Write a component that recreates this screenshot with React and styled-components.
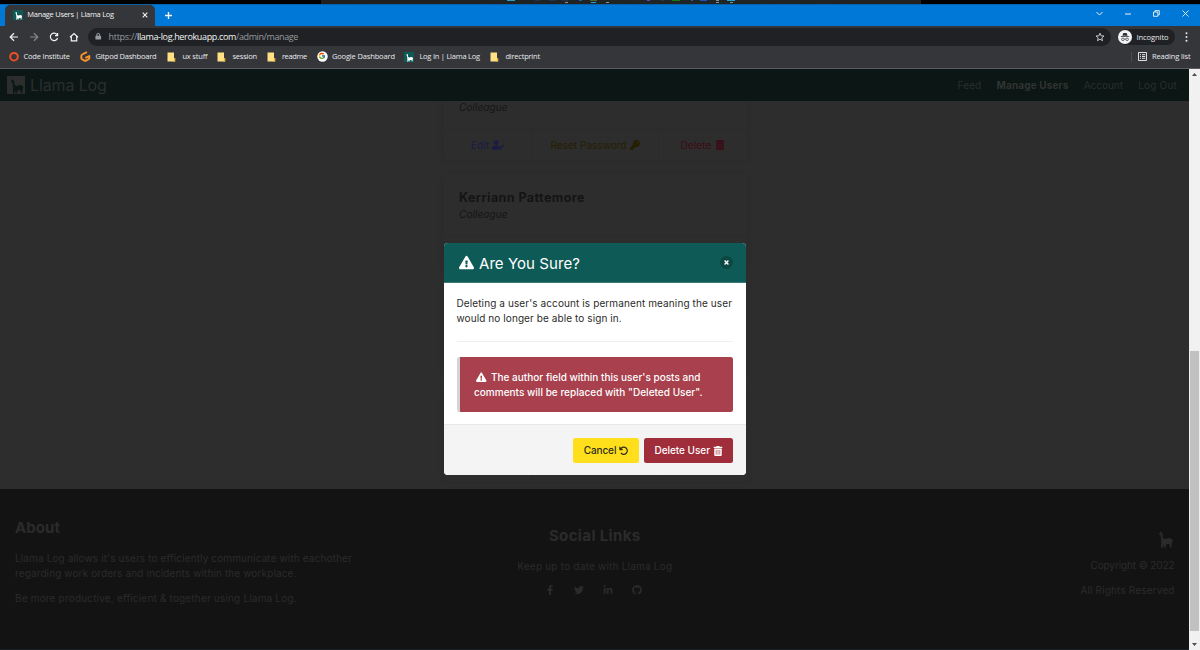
import React from "react";
import styled, { createGlobalStyle } from "styled-components";
import { FaUserEdit, FaKey, FaTrashAlt, FaExclamationTriangle, FaFacebookF, FaTwitter, FaLinkedinIn, FaGithub, FaLock } from "react-icons/fa";
import { FaArrowRotateLeft } from "react-icons/fa6";
import { FcGoogle } from "react-icons/fc";

const Global = createGlobalStyle`
  * { box-sizing: border-box; }
  body { margin: 0; overflow: hidden; background: #000; }
  button, a { font: inherit; color: inherit; text-decoration: none; }
  h1, h2, p { margin: 0; font-weight: 400; }
  svg { display: block; flex: none; }
`;

const Screen = styled.div`
  width: 1200px;
  height: 650px;
  display: flex;
  flex-direction: column;
  overflow: hidden;
  font-family: Inter, sans-serif;
  font-size: 10px;
  line-height: 15px;
`;

const Text = styled.span`
  white-space: pre;
  letter-spacing: ${(p) => p.$ls || 0}px;
`;

/* ---------- browser window ---------- */
const Chrome = styled.header`
  font-family: "Open Sans", sans-serif;
  font-size: 7.5px;
  color: #e8eaed;
  flex: none;
  height: 69px;
  background: #35363a;
  border-bottom: 1px solid #5b5c5f;
`;
const Taskbar = styled.div`
  height: 4px;
  background: linear-gradient(90deg, #000 321px, #202020 321px, #1f2526 700px, #222 921px, #000 921px);
  padding-left: 500px;
`;
const TabStrip = styled.div`
  height: 22px;
  display: flex;
  align-items: stretch;
  background: #0078d7;
  border-top: 1px solid #0962a8;
  padding-left: 5px;
`;
const Tab = styled.div`
  width: 150px;
  display: flex;
  align-items: center;
  padding: 0 7px 2px 8px;
  border-radius: 5px 5px 0 0;
  background: #35363a;
  color: #f1f3f4;
`;
const TabTitle = styled(Text)`
  margin-left: 4.3px;
  flex: 1;
`;
const NewTab = styled.div`
  display: flex;
  align-items: center;
  margin-left: 9px;
  padding-bottom: 1px;
`;
const WindowButtons = styled.div`
  margin-left: auto;
  width: 110px;
  display: flex;
  align-items: center;
  justify-content: space-between;
  padding: 0 11px 4px 6px;
`;
const Toolbar = styled.div`
  height: 21px;
  display: flex;
  align-items: center;
  padding: 0 0 0 8px;
`;
const NavButtons = styled.div`
  width: 80px;
  display: flex;
  gap: 8px;
`;
const Address = styled.div`
  width: 1023px;
  height: 18px;
  margin-top: 1px;
  border-radius: 9px;
  background: #202124;
  display: flex;
  align-items: center;
  padding: 0 6px 1px 7px;
  font-size: 9px;
  color: #979a9e;
`;
const Url = styled.div`
  margin-left: 7px;
  flex: 1;
  display: flex;
  b { font-weight: 400; color: #f1f3f4; }
`;
const Profile = styled.div`
  width: 57px;
  height: 16px;
  margin: 1px 10px 0 7px;
  border-radius: 8px;
  background: #202124;
  display: flex;
  align-items: center;
  gap: 4.5px;
`;
const Bookmarks = styled.div`
  height: 20px;
  display: flex;
  align-items: center;
  padding: 0 0 0.5px 8px;
`;
const Bookmark = styled.div`
  width: ${(p) => p.$w}px;
  display: flex;
  align-items: center;
`;
const BookmarkIcon = styled.span`
  width: 15.4px;
  flex: none;
`;
const Reading = styled.div`
  margin-left: auto;
  width: 69.5px;
  display: flex;
  align-items: center;
  gap: 5px;
  border-left: 1px solid #4b4c50;
  height: 10px;
  padding-left: 6.5px;
`;

/* ---------- page ---------- */
const Viewport = styled.div`
  position: relative;
  flex: 1;
  min-height: 0;
  display: flex;
`;
const Page = styled.div`
  width: 1189px;
  display: flex;
  flex-direction: column;
  background: #2d2d2d;
`;
const NavBar = styled.nav`
  height: 32px;
  flex: none;
  display: flex;
  align-items: center;
  padding: 0 12px 0 7px;
  background: #0c1614;
  color: #2a2e2d;
`;
const Brand = styled(Text)`
  font-size: 16px;
  margin-left: 5px;
`;
const Links = styled.div`
  margin-left: auto;
  display: flex;
  gap: 15.2px;
  b { font-weight: 700; color: #303432; }
`;
const Main = styled.main`
  height: 388px;
  flex: none;
  overflow: hidden;
  display: flex;
  flex-direction: column;
  justify-content: flex-end;
  align-items: center;
  gap: 14px;
  padding: 0 0 8px 1px;
`;
const Card = styled.article`
  width: 303px;
  height: 93px;
  flex: none;
  display: flex;
  flex-direction: column;
  border-radius: 4px;
  box-shadow: 0 1px 7px rgba(0, 0, 0, 0.08);
`;
const CardBody = styled.div`
  height: 62px;
  padding: 14px 15.5px 0;
  display: flex;
  flex-direction: column;
  justify-content: flex-end;
`;
const Name = styled.h2`
  font-size: 12.5px;
  font-weight: 700;
  line-height: 18px;
  color: #141414;
`;
const Role = styled.p`
  font-style: italic;
  line-height: 15px;
  margin-bottom: 14.5px;
  color: #151515;
`;
const Actions = styled.div`
  flex: 1;
  display: grid;
  grid-template-columns: 88px 126px 1fr;
  border-top: 1px solid #2a2a2a;
`;
const Action = styled.div`
  display: flex;
  align-items: center;
  justify-content: center;
  gap: 3px;
  color: ${(p) => p.$c};
  & + & { border-left: 1px solid #2a2a2a; }
`;
const Footer = styled.footer`
  flex: 1;
  display: flex;
  justify-content: space-between;
  background: #131313;
  color: #2b2b2b;
  border-bottom: 1px solid #1c2023;
  padding: 0 14.5px 0 15px;
`;
const FooterColumn = styled.section`
  width: ${(p) => p.$w}px;
  display: flex;
  flex-direction: column;
  align-items: ${(p) => p.$align};
  padding-top: ${(p) => p.$top}px;
`;
const FooterTitle = styled.h2`
  font-size: 15px;
  font-weight: 700;
  line-height: 20px;
  margin-bottom: 13px;
`;
const Paragraph = styled.p`
  display: flex;
  flex-direction: column;
  margin-bottom: 10px;
`;
const Social = styled.div`
  display: grid;
  grid-template-columns: repeat(4, 29px);
  justify-items: center;
  margin: 1.5px 2px 0 0;
`;
const Copyright = styled.div`
  margin-top: 10px;
  display: flex;
  flex-direction: column;
  align-items: flex-end;
  gap: 10px;
`;
const ScrollBar = styled.aside`
  width: 11px;
  display: flex;
  flex-direction: column;
  align-items: center;
  justify-content: space-between;
  background: #f1f1f1;
  padding: 4px 0 4px;
`;
const Thumb = styled.div`
  width: 9px;
  height: 280px;
  margin: auto 0 12.5px;
  background: #c1c1c1;
`;

/* ---------- dialog ---------- */
const Dialog = styled.section`
  position: absolute;
  left: 444px;
  top: 174px;
  width: 301.5px;
  height: 232px;
  border-radius: 4px;
  overflow: hidden;
  display: flex;
  flex-direction: column;
  background: #fff;
  color: #2b2b2b;
`;
const DialogHead = styled.header`
  height: 40px;
  display: flex;
  align-items: center;
  padding: 0 12.5px 0 15px;
  background: #0e5a56;
  border-bottom: 1px solid #3c7a76;
  color: #fff;
`;
const DialogTitle = styled.h1`
  flex: 1;
  font-size: 15px;
  line-height: 20px;
  margin: 2px 0 0 5px;
`;
const CloseButton = styled.button`
  width: 13px;
  height: 13px;
  padding: 0;
  border: 0;
  border-radius: 50%;
  background: #0c4743;
  display: grid;
  place-items: center;
`;
const DialogBody = styled.div`
  height: 141px;
  padding: 12.6px 12.5px 0;
`;
const Rule = styled.hr`
  margin: 15px 0;
  border: 0;
  border-top: 1px solid #eeeeee;
`;
const Alert = styled.div`
  height: 55px;
  border-left: 3px solid #d6d3d4;
  border-radius: 2.5px;
  background: #a8404d;
  color: #fff;
  font-weight: 500;
  padding: 13.4px 14.5px 0;
`;
const AlertLine = styled.div`
  display: flex;
  align-items: center;
  gap: 4.5px;
  padding-left: ${(p) => p.$indent || 0}px;
`;
const DialogFoot = styled.footer`
  flex: 1;
  display: flex;
  justify-content: flex-end;
  gap: 5px;
  padding: 13px 12.5px 0;
  border-top: 1px solid #e8e8e8;
  background: #f4f4f4;
`;
const Button = styled.button`
  width: ${(p) => p.$w}px;
  height: 25px;
  padding: 0;
  border: 0;
  border-radius: 2.5px;
  display: flex;
  align-items: center;
  justify-content: center;
  gap: 2.5px;
  font-weight: 500;
  background: ${(p) => p.$bg};
  color: ${(p) => p.$fg};
`;

const LLAMA = "M1.5 0 2.3 1.2 3.5 2 3.8 7 6 8 10.5 7 13 8 13.7 10 12.8 12.5 12.6 16.5H11L10.6 13H7.2L6.7 16.5H5.1L4.6 13.2 3.6 17H2.2L2.3 11 1.5 3.9 0 3.4 .2 2.4 1.1 1.5Z";

const Llama = () => <svg width="16" height="17" viewBox="0 0 16 17"><path d={LLAMA} fill="#2b2b2b" /></svg>;
const LlamaTile = ({ size, bg, fg }) => (
  <svg width={size} height={size} viewBox="0 0 18 18">
    <rect width="18" height="18" fill={bg} />
    <path d={LLAMA} fill={fg} transform="translate(4 3) scale(.9 .86)" />
  </svg>
);
const Line = ({ w = 10, h = w, d, sw = 1.2, c = "#f1f3f4", box = `0 0 ${w} ${h}` }) => (
  <svg width={w} height={h} viewBox={box} fill="none" stroke={c} strokeWidth={sw}><path d={d} /></svg>
);
const Folder = () => (
  <svg width="9" height="10" viewBox="0 0 9 10"><path d="M.5 .5h6.5v7h1v2H.5Z" fill="#ffe183" /><path d="M7.1 6h1.2v3.5H5.3l1.8-1.2Z" fill="#e9bd36" /></svg>
);
const Ring = () => <svg width="11" height="11" viewBox="0 0 11 11"><circle cx="6" cy="5.7" r="3.8" fill="none" stroke="#f04e23" strokeWidth="2" /></svg>;
const Gitpod = () => (
  <svg width="11" height="11" viewBox="0 0 11 11" fill="none" stroke="#ff9429" strokeWidth="1.9" strokeLinecap="round" strokeLinejoin="round">
    <path d="M6.3 1.4 2.2 3.5Q1.3 4 1.3 5v2q0 .8.7 1.2l2.5 1.4q.8.4 1.6 0l2.4-1.4q.8-.4.8-1.2V5L6 6.6" />
  </svg>
);
const GoogleBadge = () => <svg width="11" height="11" viewBox="0 0 11 11"><circle cx="5.5" cy="5.5" r="5.2" fill="#fff" /><FcGoogle x="1.2" y="1.2" width="8.6" height="8.6" /></svg>;
const Incognito = () => (
  <svg width="14" height="14" viewBox="0 0 14 14">
    <circle cx="7" cy="7" r="7" fill="#f1f3f4" />
    <path d="M4.5 5.8 5.1 3.3Q5.3 2.8 7 3.1 8.7 2.8 8.9 3.3L9.5 5.8ZM2.8 6.2h8.4v.8H2.8Z" fill="#303136" />
    <path d="M6.2 9.2Q7 8.7 7.8 9.2" stroke="#303136" fill="none" strokeWidth=".7" />
    <circle cx="4.9" cy="9.3" r="1.3" fill="none" stroke="#303136" strokeWidth=".7" />
    <circle cx="9.1" cy="9.3" r="1.3" fill="none" stroke="#303136" strokeWidth=".7" />
  </svg>
);
const TaskIcons = () => (
  <svg width="250" height="4" viewBox="500 0 250 4">
    <path d="M507 0h8v1h-8z" fill="#2f9dc4" />
    <path d="M535 0h5v1h-5zM549 0h7v1h-7zM562 0h6v1h-6zM661 0h3v1h-3z" fill="#1f3450" />
    <path d="M579 0h3v1h-3zM691 0h2v1h-2z" fill="#1d5ea8" /><path d="M700 0h7v1h-7z" fill="#1c51b8" />
    <path d="M591 2h5v1h-5zM727 0h8v1h-8z" fill="#27a2d4" />
    <path d="M590 0h7v1h-7z" fill="#4d6128" />
    <path d="M647 0h3v1h-3z" fill="#5548c8" /><path d="M672 0h8v1h-8z" fill="#107c10" />
    <path d="M565 2h3v1h-3zM606 2h3v1h-3zM716 0h3v1h-3zM716 2h3v1h-3zM730 2h3v1h-3z" fill="#8a9298" />
  </svg>
);

const bookmarks = [
  { label: "Code Institute", icon: <Ring />, w: 72, ls: -0.177 },
  { label: "Gitpod Dashboard", icon: <Gitpod />, w: 87, ls: -0.211 },
  { label: "ux stuff", icon: <Folder />, w: 50, ls: -0.172 },
  { label: "session", icon: <Folder />, w: 49.5, ls: -0.208 },
  { label: "readme", icon: <Folder />, w: 50, ls: -0.365 },
  { label: "Google Dashboard", icon: <GoogleBadge />, w: 87.5, ls: -0.145 },
  { label: "Log In | Llama Log", icon: <LlamaTile size={10} bg="#0e5a56" fg="#fff" />, w: 86, ls: -0.234 },
  { label: "directprint", icon: <Folder />, w: 60, ls: -0.214 },
];

const UserActions = () => (
  <Actions>
    <Action $c="#191c44"><Text $ls={0.168}>Edit</Text><FaUserEdit size={12} /></Action>
    <Action $c="#261e02"><Text $ls={0.029}>Reset Password</Text><FaKey size={10} /></Action>
    <Action $c="#3c0a13"><Text $ls={0.115}>Delete</Text><FaTrashAlt size={10} /></Action>
  </Actions>
);

const Member = ({ name, role, editable }) => (
  <Card>
    <CardBody>
      {name && <Name><Text $ls={0.44}>{name}</Text></Name>}
      {role && <Role><Text $ls={0.09}>{role}</Text></Role>}
    </CardBody>
    {editable ? <UserActions /> : <Actions><Action /><Action /><Action /></Actions>}
  </Card>
);

export default function App() {
  return (
    <Screen>
      <Global />
      <Chrome>
        <Taskbar><TaskIcons /></Taskbar>
        <TabStrip>
          <Tab>
            <LlamaTile size={10} bg="#0e5a56" fg="#fff" />
            <TabTitle $ls={-0.286}>Manage Users | Llama Log</TabTitle>
            <Line w={6} d="M.7.7 5.3 5.3M5.3.7.7 5.3" sw={1.1} />
          </Tab>
          <NewTab><Line w={9} d="M4.5 1v7M1 4.5h7" sw={1.4} /></NewTab>
          <WindowButtons>
            <Line w={7} h={5} d="M.5 1 3.5 4 6.5 1" sw={1} />
            <Line w={6} h={2} d="M0 1h6" sw={1} />
            <Line w={7} d="M.5 2h4.3v4.3H.5ZM2 2V.6h4.3v4.3H5" sw={0.9} />
            <Line w={7} d="M.5.5 6.5 6.5M6.5.5.5 6.5" sw={0.9} />
          </WindowButtons>
        </TabStrip>
        <Toolbar>
          <NavButtons>
            <Line w={12} d="M10 6H2.5M6 2.3 2.2 6 6 9.7" />
            <Line w={12} d="M2 6h7.5M6 2.3 9.8 6 6 9.7" c="#85878b" />
            <Line w={12} d="M9.3 4A3.7 3.7 0 1 0 9.6 7M9.6 2v2.7H7" />
            <Line w={12} d="M2 6.3 6 2.5 10 6.3M3.3 5.5v4.3h5.4V5.5" />
          </NavButtons>
          <Address>
            <FaLock size={6.5} color="#979a9e" />
            <Url>
              <Text $ls={-0.275}>https://</Text>
              <b><Text $ls={-0.351}>llama-log.herokuapp.com</Text></b>
              <Text $ls={-0.387}>/admin/manage</Text>
            </Url>
            <Line w={10} d="M5 1.2 6.1 3.8 9 4 6.8 5.9 7.5 8.7 5 7.2 2.5 8.7 3.2 5.9 1 4 3.9 3.8Z" sw={0.9} c="#d5d7da" />
          </Address>
          <Profile><Incognito /><Text $ls={-0.063}>Incognito</Text></Profile>
          <svg width="3" height="10" viewBox="0 0 3 10" fill="#e8eaed"><circle cx="1.5" cy="1.3" r="1" /><circle cx="1.5" cy="5" r="1" /><circle cx="1.5" cy="8.7" r="1" /></svg>
        </Toolbar>
        <Bookmarks>
          {bookmarks.map((b) => (
            <Bookmark key={b.label} $w={b.w}><BookmarkIcon>{b.icon}</BookmarkIcon><Text $ls={b.ls}>{b.label}</Text></Bookmark>
          ))}
          <Reading>
            <Line w={9} d="M.5.5h8v8h-8ZM2 2.7h1M4 2.7h3.2M2 4.5h1M4 4.5h3.2M2 6.3h1M4 6.3h3.2" sw={0.9} />
            <Text $ls={-0.138}>Reading list</Text>
          </Reading>
        </Bookmarks>
      </Chrome>

      <Viewport>
        <Page>
          <NavBar>
            <LlamaTile size={18} bg="#2c2d2d" fg="#0c1614" />
            <Brand $ls={-0.12}>Llama Log</Brand>
            <Links>
              <Text $ls={0.15}>Feed</Text>
              <b><Text $ls={0.13}>Manage Users</Text></b>
              <Text $ls={-0.02}>Account</Text>
              <Text $ls={0.2}>Log Out</Text>
            </Links>
          </NavBar>
          <Main>
            <Member role="Colleague" editable />
            <Member name="Kerriann Pattemore" role="Colleague" />
            <Member />
            <Member />
          </Main>
          <Footer>
            <FooterColumn $w={386} $top={29} $align="flex-start">
              <FooterTitle><Text $ls={0.063}>About</Text></FooterTitle>
              <Paragraph>
                <Text $ls={0.125}>Llama Log allows it's users to efficiently communicate with eachother</Text>
                <Text $ls={0.12}>regarding work orders and incidents within the workplace.</Text>
              </Paragraph>
              <Text $ls={0.18}>Be more productive, efficient & together using Llama Log.</Text>
            </FooterColumn>
            <FooterColumn $w={386} $top={36.5} $align="center">
              <FooterTitle><Text $ls={0.37}>Social Links</Text></FooterTitle>
              <Paragraph><Text $ls={0.214}>Keep up to date with Llama Log</Text></Paragraph>
              <Social><FaFacebookF size={10} /><FaTwitter size={10} /><FaLinkedinIn size={10} /><FaGithub size={10} /></Social>
            </FooterColumn>
            <FooterColumn $w={386} $top={41.5} $align="flex-end">
              <Llama />
              <Copyright>
                <Text $ls={-0.118}>Copyright © 2022</Text>
                <Text $ls={0.145}>All Rights Reserved</Text>
              </Copyright>
            </FooterColumn>
          </Footer>
        </Page>
        <ScrollBar>
          <svg width="5" height="3" viewBox="0 0 5 3"><path d="M0 3 2.5 0 5 3Z" fill="#505050" /></svg>
          <Thumb />
          <svg width="5" height="3" viewBox="0 0 5 3"><path d="M0 0 2.5 3 5 0Z" fill="#505050" /></svg>
        </ScrollBar>

        <Dialog role="dialog">
          <DialogHead>
            <FaExclamationTriangle size={15} />
            <DialogTitle><Text $ls={0.06}>Are You Sure?</Text></DialogTitle>
            <CloseButton aria-label="Close"><Line w={5} d="M.6.6 4.4 4.4M4.4.6.6 4.4" sw={1.4} c="#fff" /></CloseButton>
          </DialogHead>
          <DialogBody>
            <Paragraph>
              <Text $ls={0.106}>Deleting a user's account is permanent meaning the user</Text>
              <Text $ls={0.09}>would no longer be able to sign in.</Text>
            </Paragraph>
            <Rule />
            <Alert>
              <AlertLine $indent={2}><FaExclamationTriangle size={10.5} /><Text $ls={0.01}>The author field within this user's posts and</Text></AlertLine>
              <AlertLine><Text $ls={0.02}>comments will be replaced with "Deleted User".</Text></AlertLine>
            </Alert>
          </DialogBody>
          <DialogFoot>
            <Button $w={66} $bg="#ffdf1c" $fg="#2b2b1c"><Text $ls={-0.1}>Cancel</Text><FaArrowRotateLeft size={9.5} /></Button>
            <Button $w={89} $bg="#9f2d3a" $fg="#fff"><Text $ls={-0.03}>Delete User</Text><FaTrashAlt size={10} /></Button>
          </DialogFoot>
        </Dialog>
      </Viewport>
    </Screen>
  );
}
